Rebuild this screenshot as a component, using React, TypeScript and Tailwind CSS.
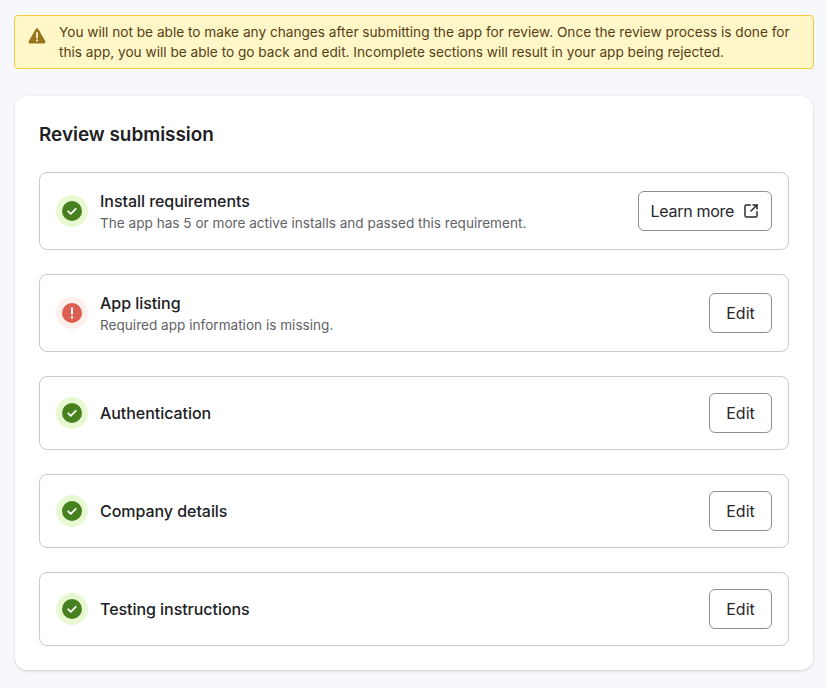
import React from "react";
import { SquareArrowOutUpRight } from "lucide-react";

interface Section {
  title: string;
  description?: string;
  status: "ok" | "error";
  action: "edit" | "learn";
}

const sections: Section[] = [
  {
    title: "Install requirements",
    description: "The app has 5 or more active installs and passed this requirement.",
    status: "ok",
    action: "learn",
  },
  {
    title: "App listing",
    description: "Required app information is missing.",
    status: "error",
    action: "edit",
  },
  { title: "Authentication", status: "ok", action: "edit" },
  { title: "Company details", status: "ok", action: "edit" },
  { title: "Testing instructions", status: "ok", action: "edit" },
];

const StatusIcon = ({ status }: { status: Section["status"] }) => {
  if (status === "ok") {
    return (
      <div className="flex h-8 w-8 shrink-0 items-center justify-center rounded-full bg-[#e8f8d3]">
        <svg width="20" height="20" viewBox="0 0 20 20">
          <circle cx="10" cy="10" r="10" fill="#46801f" />
          <path d="M6.2 10.3l2.6 2.5 5-5" fill="none" stroke="#fff" strokeWidth="1.8" strokeLinecap="round" strokeLinejoin="round" />
        </svg>
      </div>
    );
  }
  return (
    <div className="flex h-8 w-8 shrink-0 items-center justify-center rounded-full bg-[#fdf0ed]">
      <svg width="20" height="20" viewBox="0 0 20 20">
        <circle cx="10" cy="10" r="10" fill="#dd5f50" />
        <path d="M10 5.2v5.6" fill="none" stroke="#fff" strokeWidth="2" strokeLinecap="round" />
        <circle cx="10" cy="14.2" r="1.2" fill="#fff" />
      </svg>
    </div>
  );
};

const SectionRow = ({ section }: { section: Section }) => (
  <div className="flex items-center gap-3 rounded-lg border border-[#c9cacf] bg-white p-4">
    <StatusIcon status={section.status} />
    <div className="min-w-0 flex-1">
      <div className="text-base leading-6 font-medium tracking-[-0.05px] text-[#202124]">{section.title}</div>
      {section.description && (
        <div className="text-[13.6px] leading-5 text-[#5f6267]">{section.description}</div>
      )}
    </div>
    {section.action === "learn" ? (
      <button className="flex h-10 items-center gap-[9px] rounded-md border border-[#8c8e92] bg-white px-3 text-base font-normal tracking-[-0.3px] text-[#26282b]">
        Learn more
        <SquareArrowOutUpRight size={16} strokeWidth={2.2} />
      </button>
    ) : (
      <button className="h-10 w-[63px] rounded-md border border-[#8c8e92] bg-white text-base font-normal text-[#26282b]">
        Edit
      </button>
    )}
  </div>
);

export default function App() {
  return (
    <div className="h-[688px] overflow-hidden bg-[#f7f8fb] pt-[15px] pr-[13px] pl-[14px] font-['Inter',sans-serif]">
      <div className="flex h-[54px] items-center gap-[13px] rounded border border-[#f4cb3b] bg-[#fff7c8] pr-3 pl-[13px]">
        <svg width="18" height="16" viewBox="0 0 18 16" className="shrink-0 -translate-y-[6px]">
          <path d="M7.7 1.1a1.5 1.5 0 0 1 2.6 0l7 12.2a1.5 1.5 0 0 1-1.3 2.2H2a1.5 1.5 0 0 1-1.3-2.2z" fill="#99741f" />
          <path d="M9 5v4.6" fill="none" stroke="#fff7c8" strokeWidth="1.8" strokeLinecap="round" />
          <circle cx="9" cy="12.4" r="1.1" fill="#fff7c8" />
        </svg>
        <p className="text-[13.65px] leading-5 text-[#553f16]">
          You will not be able to make any changes after submitting the app for review. Once the review process is done for this app, you will be able to go back and edit. Incomplete sections will result in your app being rejected.
        </p>
      </div>
      <div className="mx-px mt-[27px] rounded-xl bg-white p-6 shadow-[0_1px_3px_rgba(30,35,50,0.2)]">
        <h2 className="mb-[23px] pt-px text-[18.9px] leading-7 font-semibold text-[#202124]">Review submission</h2>
        <div className="flex flex-col gap-6">
          {sections.map((section) => (
            <SectionRow key={section.title} section={section} />
          ))}
        </div>
      </div>
    </div>
  );
}
